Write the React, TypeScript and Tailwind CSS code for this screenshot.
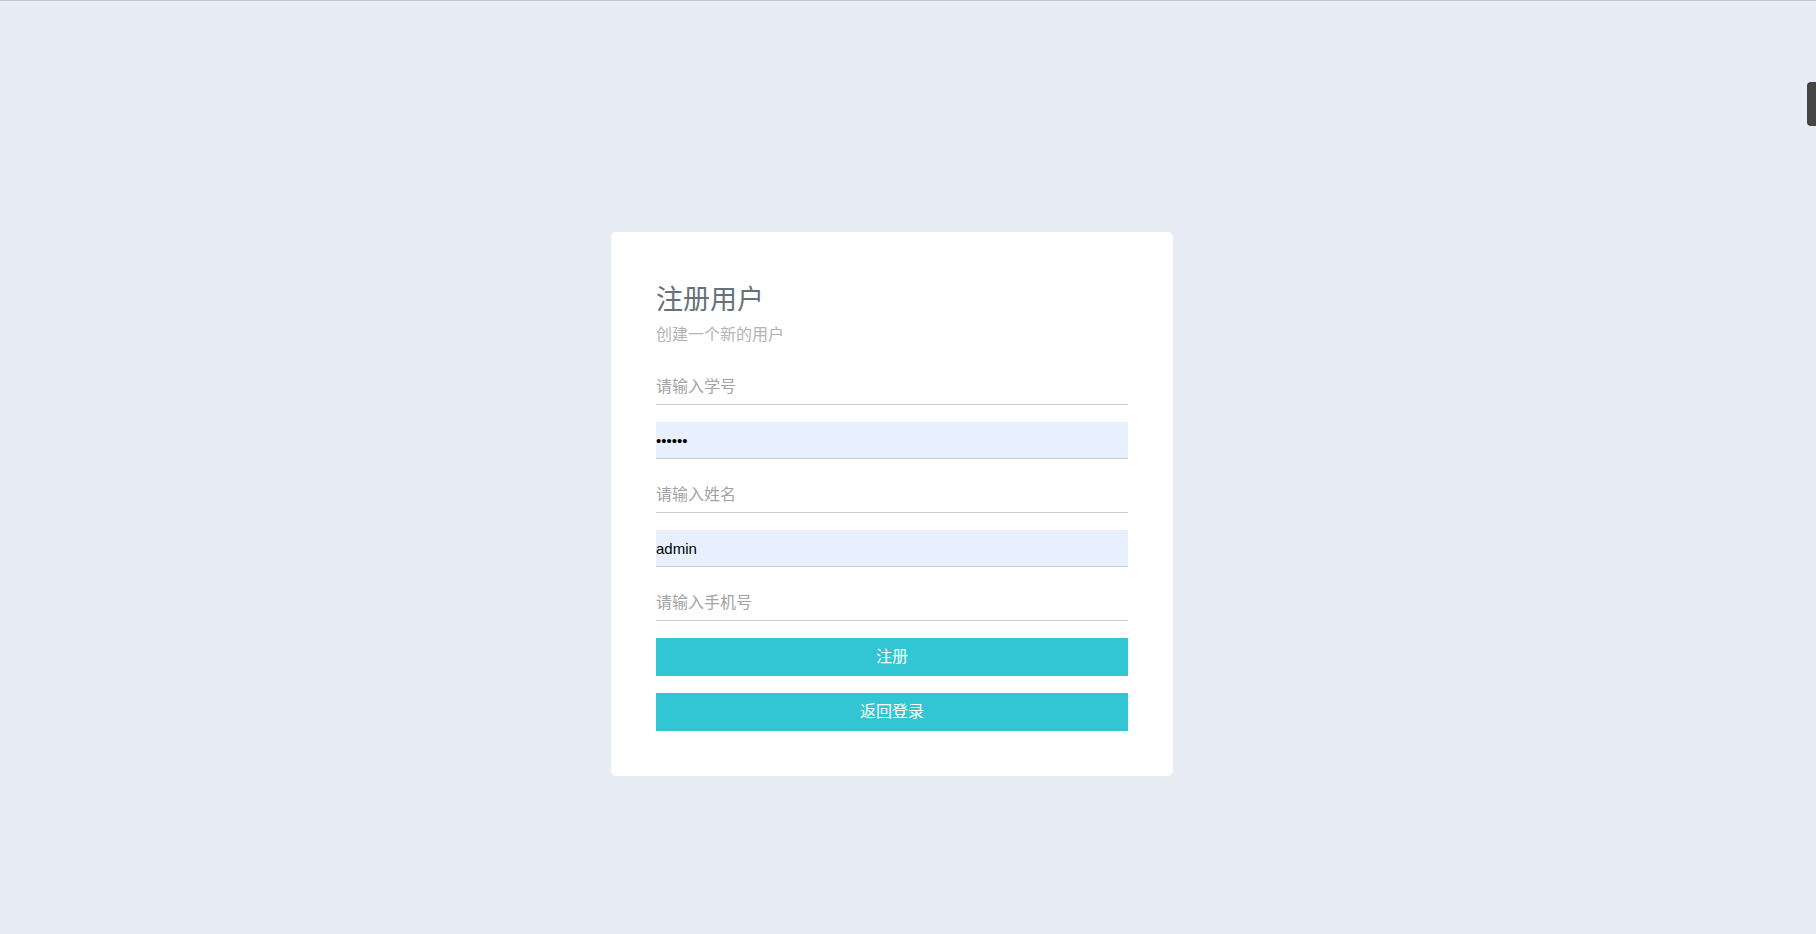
import { useState } from 'react'

const font = '"Liberation Sans", "Noto Sans CJK SC", sans-serif'

export default function App() {
  const [studentId, setStudentId] = useState('')
  const [password, setPassword] = useState('123456')
  const [name, setName] = useState('')
  const [username, setUsername] = useState('admin')
  const [phone, setPhone] = useState('')

  const fields = [
    { value: studentId, set: setStudentId, placeholder: '请输入学号', type: 'text', filled: false },
    { value: password, set: setPassword, placeholder: '请输入密码', type: 'password', filled: true },
    { value: name, set: setName, placeholder: '请输入姓名', type: 'text', filled: false },
    { value: username, set: setUsername, placeholder: '请输入用户名', type: 'text', filled: true },
    { value: phone, set: setPhone, placeholder: '请输入手机号', type: 'text', filled: false },
  ]

  return (
    <div
      className="relative min-h-[934px] w-full border-t border-[#c4c4c4] bg-[#e8ecf4] flex items-start justify-center pt-[231px] pr-[32px]"
      style={{ fontFamily: font }}
    >
      <div className="w-[562px] rounded-[5px] bg-white px-[45px] pt-[45px] pb-[45px]">
        <h2 className="text-[27px] leading-[46px] font-normal text-[#65727a]">注册用户</h2>
        <p className="text-[16px] leading-[24px] text-[#b3b3b3]">创建一个新的用户</p>

        <div className="mt-[21px] flex flex-col gap-[17px]">
          {fields.map((f) => (
            <input
              key={f.placeholder}
              type={f.type}
              value={f.value}
              onChange={(e) => f.set(e.target.value)}
              placeholder={f.placeholder}
              className={`block h-[37px] w-full border-b border-[#c5cbd6] px-0 text-[15px] text-black outline-none placeholder:text-[16px] placeholder:text-[#a3a3a3] ${
                f.filled ? 'bg-[#e8f0fe]' : 'bg-white'
              }`}
            />
          ))}

          <button className="h-[38px] w-full bg-[#32c5d3] text-[16px] text-white">注册</button>
          <button className="h-[38px] w-full bg-[#32c5d3] text-[16px] text-white">返回登录</button>
        </div>
      </div>

      <div className="absolute right-0 top-[81px] h-[44px] w-[9px] rounded-l-[4px] bg-[#454545]" />
    </div>
  )
}
